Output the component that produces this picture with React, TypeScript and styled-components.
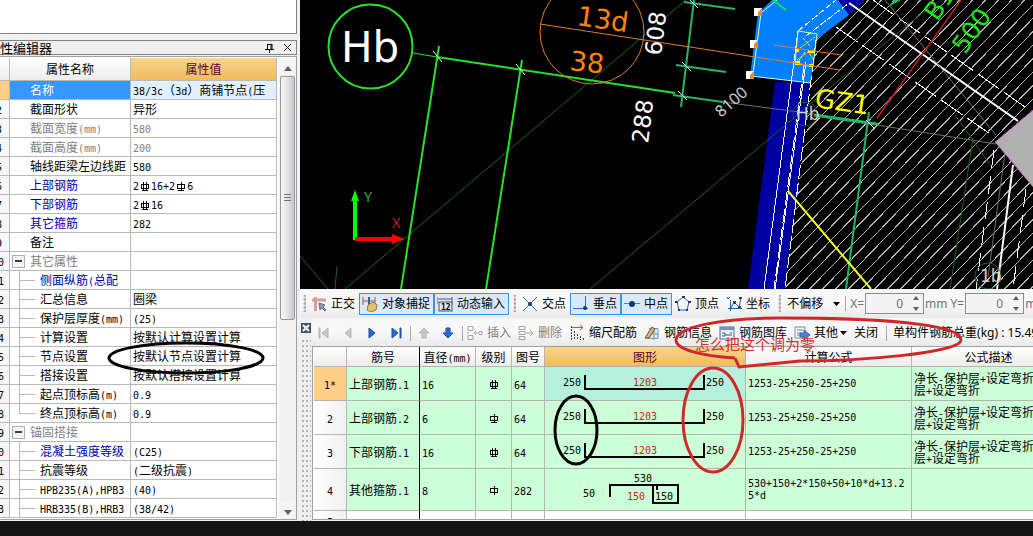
import React, { Fragment, ReactNode } from "react";
import styled, { createGlobalStyle } from "styled-components";

const Global = createGlobalStyle`
  * { box-sizing: border-box; }
  body { margin: 0; background: #141414; color: #000; font: 12px/16px "Noto Sans", "Noto Sans CJK SC", sans-serif; }
  button, input, select { font: inherit; color: inherit; }
`;

const Page = styled.div`
  min-height: 100vh;
  display: grid;
  grid-template: 1fr 15px / 300px minmax(0, 1fr);
  overflow: hidden;
  background: #f0f0f0;
`;
const Sidebar = styled.aside`
  position: relative;
  display: flex;
  flex-direction: column;
  padding-right: 3px;
  overflow: hidden;
`;
const Main = styled.main`
  display: flex;
  flex-direction: column;
  min-width: 0;
`;
const StatusStrip = styled.footer`
  grid-column: 1 / -1;
  background: #141414;
`;

/* ---------- property editor ---------- */
const EmptyPane = styled.div`
  height: 34px;
  margin-bottom: 6px;
  background: #fff;
  border: solid #80808a;
  border-width: 0 1px 1px 0;
`;
const PaneTitle = styled.header`
  display: flex;
  align-items: center;
  gap: 5px;
  height: 15px;
  padding-right: 2px;
  border: solid #808088;
  border-width: 1px 1px 1px 0;
  h2 { flex: 1; margin: 0; font-size: 13px; line-height: 12px; font-weight: 400; }
`;
const TitleButton = styled.button`
  width: 13px;
  height: 13px;
  padding: 0;
  border: 0;
  background: none;
  display: grid;
  place-items: center;
`;
const PropertyPane = styled.div`
  display: flex;
  flex: 1;
  margin: 1px 0;
  padding-top: 1px;
  background: #fff;
  border: solid #a0a0a0;
  border-width: 1px 1px 1px 0;
`;
const PropertyTable = styled.table`
  width: 277px;
  table-layout: fixed;
  border-collapse: separate;
  border-spacing: 0;
  align-self: flex-start;
  font-family: "Noto Sans CJK SC", sans-serif;
  th, td {
    height: 19px;
    padding: 0;
    border: solid #b8b8b8;
    border-width: 0 1px 1px 0;
    white-space: nowrap;
    overflow: hidden;
    line-height: 16px;
    font-weight: 400;
  }
  thead th { height: 23px; background: linear-gradient(#fff, #ececec); }
  thead th:last-child { background: linear-gradient(#f8d48c, #f0bc60); color: #600030; }
`;
const IndexCell = styled.th<{ $on?: boolean; $wide?: boolean }>`
  background: ${(p) => (p.$on ? "#ffcf88" : "#f7f7f7")};
  text-align: left;
  text-indent: ${(p) => (p.$wide ? "-8px" : "-4px")};
`;
const NameCell = styled.td<{ $tone: string; $on?: boolean }>`
  color: ${(p) => p.$tone};
  background: ${(p) => (p.$on ? "#3399ff" : "#fff")};
`;
const ValueCell = styled.td<{ $tone: string; $on?: boolean }>`
  && { padding-left: 2px; }
  color: ${(p) => p.$tone};
  background: ${(p) => (p.$on ? "#e0f0ff" : "#fff")};
`;
const NameLayout = styled.div<{ $indent: number }>`
  display: flex;
  align-items: center;
  height: 18px;
  padding-left: ${(p) => p.$indent}px;
`;
const Branch = styled.i<{ $last?: boolean }>`
  position: relative;
  width: 16px;
  height: 18px;
  margin-right: 5px;
  &::before { content: ""; position: absolute; left: 0; top: 0; bottom: ${(p) => (p.$last ? "8px" : "-1px")}; border-left: 1px solid #b8b8b8; }
  &::after { content: ""; position: absolute; left: 0; right: 0; top: 9px; border-top: 1px solid #b8b8b8; }
`;
const Fold = styled.button`
  width: 13px;
  height: 13px;
  margin-right: 5px;
  padding: 0;
  border: 1px solid #a8b0b8;
  background: #f4f4f4;
  display: grid;
  place-items: center;
`;
const ScrollTrack = styled.div`
  display: flex;
  flex-direction: column;
  align-items: center;
  flex: 1;
  margin-left: 2px;
  background: #f1f1f1;
`;
const ScrollButton = styled.button`
  width: 15px;
  height: 17px;
  padding: 0;
  border: 0;
  background: #f4f4f4;
`;
const Thumb = styled.div`
  display: flex;
  align-items: center;
  justify-content: center;
  width: 15px;
  height: 244px;
  margin: 1px 0 auto;
  border: 1px solid #969696;
  border-radius: 2px;
  background: linear-gradient(90deg, #f6f6f6, #e6e6e8 45%, #c8c8cc);
`;

const Ascii = styled.span`
  font-family: "DejaVu Sans Mono", monospace;
  font-size: 10px;
  line-height: 0;
`;
const Mixed = ({ children }: { children: string }) => (
  <>
    {children.split(/([\x20-\x7e]+)/).map((part, i) =>
      i % 2 ? <Ascii key={i}>{part}</Ascii> : <Fragment key={i}>{part}</Fragment>
    )}
  </>
);

const GradeSvg = styled.svg`
  vertical-align: -2px;
  margin: 0 1px;
`;
const Grade = ({ level }: { level: 1 | 2 | 3 }) => (
  <GradeSvg width="10" height="11" fill="none" stroke="#000" shapeRendering="crispEdges" aria-label={`grade ${level}`}>
    <path d="M1.5 3.5h7v4h-7z" />
    <path d={level === 3 ? "M3.5 1v9M6.5 1v9" : "M5 1v9"} />
    {level > 1 && <path d="M2 9.5h6" />}
  </GradeSvg>
);

type Prop = { name: string; value?: ReactNode; tone?: string; vtone?: string; kind?: "group" | "child" | "last" };
const BLUE = "#0000a8";
const GRAY = "#808080";
const props: Prop[] = [
  { name: "名称", value: <Mixed>38/3c（3d）商铺节点(压</Mixed>, tone: "#fff" },
  { name: "截面形状", value: "异形" },
  { name: "截面宽度(mm)", value: <Mixed>580</Mixed>, tone: GRAY, vtone: GRAY },
  { name: "截面高度(mm)", value: <Mixed>200</Mixed>, tone: GRAY, vtone: GRAY },
  { name: "轴线距梁左边线距", value: <Mixed>580</Mixed> },
  { name: "上部钢筋", value: <><Ascii>2</Ascii><Grade level={3} /><Ascii>16+2</Ascii><Grade level={2} /><Ascii>6</Ascii></>, tone: BLUE },
  { name: "下部钢筋", value: <><Ascii>2</Ascii><Grade level={3} /><Ascii>16</Ascii></>, tone: BLUE },
  { name: "其它箍筋", value: <Mixed>282</Mixed>, tone: BLUE },
  { name: "备注" },
  { name: "其它属性", tone: GRAY, kind: "group" },
  { name: "侧面纵筋(总配", tone: BLUE, kind: "child" },
  { name: "汇总信息", value: "圈梁", kind: "child" },
  { name: "保护层厚度(mm)", value: <Mixed>(25)</Mixed>, kind: "child" },
  { name: "计算设置", value: "按默认计算设置计算", kind: "child" },
  { name: "节点设置", value: "按默认节点设置计算", kind: "child" },
  { name: "搭接设置", value: "按默认搭接设置计算", kind: "child" },
  { name: "起点顶标高(m)", value: <Mixed>0.9</Mixed>, kind: "child" },
  { name: "终点顶标高(m)", value: <Mixed>0.9</Mixed>, kind: "last" },
  { name: "锚固搭接", tone: GRAY, kind: "group" },
  { name: "混凝土强度等级", value: <Mixed>(C25)</Mixed>, tone: BLUE, kind: "child" },
  { name: "抗震等级", value: <Mixed>(二级抗震)</Mixed>, kind: "child" },
  { name: "HPB235(A),HPB3", value: <Mixed>(40)</Mixed>, kind: "child" },
  { name: "HRB335(B),HRB3", value: <Mixed>(38/42)</Mixed>, kind: "child" },
];

const SideMark = styled.svg`
  position: absolute;
  left: 106px;
  top: 340px;
  pointer-events: none;
`;

const PropertyEditor = () => (
  <Sidebar>
    <EmptyPane />
    <PaneTitle>
      <h2>性编辑器</h2>
      <TitleButton aria-label="固定">
        <svg width="9" height="10" fill="none" stroke="#000"><path d="M2.5 1v5M2 1.5h5M6 1v5M7 1v5M0 6.5h9M4.5 7v3" /></svg>
      </TitleButton>
      <TitleButton aria-label="关闭">
        <svg width="9" height="9" stroke="#222"><path d="M1 1l7 7M8 1l-7 7" /></svg>
      </TitleButton>
    </PaneTitle>
    <PropertyPane>
      <PropertyTable>
        <colgroup><col style={{ width: 10 }} /><col style={{ width: 121 }} /><col /></colgroup>
        <thead><tr><th /><th>属性名称</th><th>属性值</th></tr></thead>
        <tbody>
          {props.map((p, i) => (
            <tr key={p.name}>
              <IndexCell $on={i === 0} $wide={i > 8}><Ascii>{i === 0 ? "" : i + 1}</Ascii></IndexCell>
              <NameCell $tone={p.tone ?? "#000"} $on={i === 0}>
                <NameLayout $indent={p.kind === "group" ? 2 : p.kind ? 9 : 20}>
                  {p.kind === "group" && (
                    <Fold aria-label={`折叠${p.name}`}><svg width="7" height="2"><path d="M0 1h7" stroke="#246" strokeWidth="2" /></svg></Fold>
                  )}
                  {(p.kind === "child" || p.kind === "last") && <Branch $last={p.kind === "last"} />}
                  <span><Mixed>{p.name}</Mixed></span>
                </NameLayout>
              </NameCell>
              <ValueCell $tone={p.vtone ?? "#000"} $on={i === 0}>{p.value}</ValueCell>
            </tr>
          ))}
        </tbody>
      </PropertyTable>
      <ScrollTrack>
        <ScrollButton aria-label="向上"><svg width="8" height="5"><path d="M0 5l4-5 4 5z" fill="#606060" /></svg></ScrollButton>
        <Thumb><svg width="7" height="8"><path d="M0 .5h7M0 3.5h7M0 6.5h7" stroke="#707070" /></svg></Thumb>
        <ScrollButton aria-label="向下"><svg width="8" height="5"><path d="M0 0l4 5 4-5z" fill="#606060" /></svg></ScrollButton>
      </ScrollTrack>
    </PropertyPane>
    <SideMark width="160" height="36"><ellipse cx="80" cy="18" rx="77" ry="15" fill="none" stroke="#000" strokeWidth="3" /></SideMark>
  </Sidebar>
);

/* ---------- drawing canvas ---------- */
const Canvas = styled.div`
  flex: 1 0 289px;
  background: #000;
  overflow: hidden;
`;
const Drawing = styled.svg`
  display: block;
  width: 100%;
  height: 289px;
  font-family: "DejaVu Sans", sans-serif;
`;

const hatch = Array.from({ length: 44 }, (_, i) => 220 + i * 13);

const Plan = () => (
  <Canvas>
    <Drawing fill="none" role="img" aria-label="结构平面图">
      <defs>
        <clipPath id="slab"><path d="M516 40L551 13L565 0H733V289H485Z" /></clipPath>
      </defs>
      <g clipPath="url(#slab)" stroke="#b4b4b4" shapeRendering="crispEdges">
        {hatch.map((x) => <path key={x} d={`M${x - 20} 300L${x + 290} -20`} />)}
      </g>

      <path d="M475 82H511L485 289H448Z" fill="#0000a0" />
      <path d="M536 0H565L549 15Z" fill="#0000a0" />
      <path d="M458 13L472 0H538L549 15L516 40L511 83L450 76Z" fill="#0080ff" />
      <path d="M450 76L511 83M453 74L461 13L477 0" stroke="#e8ffb0" />
      <g stroke="#fff" shapeRendering="crispEdges">
        <path d="M498 31L536 0M506 36L549 3" strokeDasharray="7 2" />
        <path d="M498 31L464 289M506 62L475 289" />
        <path d="M504 66L474 289M516 40L485 289" strokeDasharray="14 4" />
        <path d="M573 0L725 107M536 27L693 136" strokeDasharray="26 6" />
        <path d="M694 150L676 289M726 189L713 289" strokeDasharray="18 8" />
      </g>
      <path d="M549 3L718 121M713 165L697 289" stroke="#fff" strokeWidth="2" />
      <path d="M498 31L517 34L513 67L495 63Z" stroke="#f4f078" />
      <path d="M500 48L515 37M497 60L508 52L514 60M503 38l7 8M505 52l-7 10" stroke="#f0e850" strokeDasharray="3 1" />
      <path d="M495 61h5v4h-5zM508 50h6v3h-6zM496 49h3v3h-3zM509 64h4v3h-4z" fill="#ff0" />

      <g stroke="#707070">
        <path d="M423 102L514 114M577 125L696 144M585 0L696 135M705 153L688 277" />
      </g>
      <g stroke="#1d641d">
        <path d="M45 289L386 0M290 289L495 117L533 85L630 7M0 256L28 289M37 266L35 289M655 115L691 166M673 138L650 289" />
        <circle cx="505" cy="114" r="12" />
        <circle cx="688" cy="276" r="13" />
      </g>

      <g stroke="#28e028" strokeWidth="2">
        <circle cx="70.500" cy="46.500" r="42" />
        <path d="M113 53L137 57" strokeWidth="1" />
        <path d="M137 57L375 93M139 46L101 289M222 60L186 289" />
      </g>
      <g stroke="#20b868" strokeWidth="2">
        <path d="M394 0L381 107M384 2L435 9M376 65L426 72M373 95L423 102M515 115L578 124M569 112L546 289" />
        <path d="M514 115L576 124" strokeWidth="3" />
        <path d="M473 0L486 10" stroke="#00e060" />
      </g>
      <path d="M588 7L594 0H601Z" fill="#20b868" />
      <path d="M133 51l9 11M216 64l9 11M390 0l8 8M382 62l9 9M378 91l9 9M566 120l9 9" stroke="#fff" />

      <g stroke="#e07c28">
        <circle cx="292" cy="32" r="52" />
        <path d="M240 24L540 70M474 45L541 55" />
      </g>
      <path d="M577 118L661 0" stroke="#b82020" strokeWidth="1.500" />
      <path d="M488 191L571 289" stroke="#f8f830" strokeWidth="2" />
      <path d="M695 142L733 110V187Z" fill="#b0b0b0" />
      <path d="M733 110L695 142L733 187" stroke="#d040d0" strokeDasharray="4 2" />

      {[[458, 12], [454, 44], [450, 75]].map(([x, y]) => (
        <g key={y}>
          <rect x={x - 4} y={y - 4} width="8" height="8" fill="#fff" />
          <path d={`M${x + 4} ${y - 4}v8h-4v-4z`} fill="#f08830" />
        </g>
      ))}

      <path d="M55 240V199" stroke="#0f0" strokeWidth="4" />
      <path d="M51 201L55 190L59 201Z" fill="#0f0" />
      <path d="M55 239H93" stroke="#f00" strokeWidth="4" />
      <path d="M92 234L105 239L92 244Z" fill="#f00" />
      <g fontFamily="Lato, sans-serif" fontSize="13">
        <text x="64" y="202" fill="#30b030">Y</text>
        <text x="92" y="228" fill="#c02020">X</text>
      </g>

      <text x="41" y="62" fontSize="42" fill="#fff">Hb</text>
      <g fill="#ff8408" fontSize="27">
        <text transform="translate(276 25) rotate(8)">13d</text>
        <text transform="translate(269 70) rotate(6)">38</text>
      </g>
      <g fill="#fff" fontSize="23">
        <text transform="translate(361 56) rotate(-83)">608</text>
        <text transform="translate(348 144) rotate(-83)">288</text>
      </g>
      <text transform="translate(421 118) rotate(-41)" fontSize="16" fill="#ccc" fontFamily="Noto Sans, sans-serif">8100</text>
      <g fill="#18e818" fontSize="25">
        <text transform="translate(665 55) rotate(-55)">500</text>
        <text transform="translate(637 22) rotate(-55)">B1</text>
      </g>
      <text transform="translate(514 107) rotate(8)" fontSize="26" fill="#ff0">GZ1</text>
      <g fill="#d0d0d0" fontSize="17">
        <text x="496" y="120">Hb</text>
        <text x="680" y="282">1b</text>
      </g>
    </Drawing>
  </Canvas>
);

/* ---------- toolbars ---------- */
const Dock = styled.section`
  position: relative;
  height: 232px;
  display: flex;
  flex-direction: column;
  overflow: hidden;
  background: #f0f0f0;
`;
const Toolbar = styled.div<{ $h: number; $top?: number }>`
  display: flex;
  align-items: center;
  flex: none;
  height: ${(p) => p.$h}px;
  padding-top: ${(p) => p.$top ?? 0}px;
  background: linear-gradient(#f6f6f6, #f9f9f9 45%, #eaeaea);
  white-space: nowrap;
`;
const ToolButton = styled.button<{ $on?: boolean; $muted?: boolean }>`
  display: flex;
  flex: none;
  align-items: center;
  gap: 4px;
  height: 22px;
  padding: 0 3px 0 2px;
  border: 1px solid ${(p) => (p.$on ? "#3c94dc" : "transparent")};
  background: ${(p) => (p.$on ? "#d8eafa" : "none")};
  color: ${(p) => (p.$muted ? "#808080" : "#000")};
`;
const ToolLabel = styled.span`
  display: flex;
  align-items: center;
  gap: 2px;
`;
const NavButton = styled.button`
  flex: none;
  width: 24px;
  height: 22px;
  padding: 0;
  border: 0;
  background: none;
  display: grid;
  place-items: center;
`;
const Grip = styled.i<{ $w: number }>`
  flex: none;
  width: ${(p) => p.$w}px;
  height: 17px;
  background: radial-gradient(circle at 2px 2px, #a8a8a8 1px, transparent 2px) center / 3px 4px repeat-y;
`;
const Divider = styled.i<{ $w: number }>`
  flex: none;
  width: ${(p) => p.$w}px;
  height: 15px;
  background: linear-gradient(#a8a8a8, #a8a8a8) center / 1px 15px no-repeat;
`;
const OffsetField = styled.label`
  display: flex;
  align-items: center;
  flex: none;
  height: 22px;
  padding-left: 3px;
  select { width: 46px; padding: 0; border: 0; background: none; appearance: none; }
`;
const CoordField = styled.label`
  display: flex;
  align-items: center;
  flex: none;
  gap: 1px;
  margin-right: 3px;
  color: #707070;
`;
const SpinBox = styled.span`
  display: flex;
  align-items: center;
  width: 59px;
  height: 21px;
  padding-right: 3px;
  border: 1px solid #8c8c8c;
  background: #f4f4f4;
  input { flex: 1; min-width: 0; padding: 0 9px 0 0; border: 0; background: none; text-align: right; }
`;
const Total = styled.span`
  padding-left: 2px;
`;

const Ico = ({ children }: { children: ReactNode }) => (
  <svg width="16" height="16" fill="none" stroke="#2860a8" aria-hidden="true">{children}</svg>
);
const Caret = () => <svg width="7" height="4"><path d="M0 0h7L3.500 4z" fill="#000" /></svg>;

const icons: Record<string, ReactNode> = {
  正交: <Ico><path d="M1 4h14M4.500 1v14" stroke="#dc9c98" strokeWidth="3" /><path d="M8 7l1 7 2-2 3 3 1-1-3-3 2-2z" fill="#8c98ac" stroke="#607088" /></Ico>,
  对象捕捉: <Ico><path d="M1 1v8M13 1v8M1 5h12" stroke="#a85048" /><path d="M7 1v8" stroke="#386098" strokeWidth="2" /><path d="M5 14l1-5 5-3 4 3-1 5-5 2z" fill="#e4c468" stroke="#907848" /></Ico>,
  动态输入: <Ico><path d="M0 1v7M15 1v7M1 3h14" stroke="#884848" /><rect x="2" y="6" width="13" height="9" fill="#dce8f0" stroke="#405868" /><text x="4" y="14" fontSize="8" fontFamily="DejaVu Sans Mono" fontWeight="700" fill="#000" stroke="none">12</text></Ico>,
  交点: <Ico><path d="M1 1l14 14M15 1L1 15" stroke="#3870b8" /><circle cx="8" cy="8" r="2" fill="#103878" stroke="none" /></Ico>,
  垂点: <Ico><path d="M12.500 0v14M0 12.500h15" stroke="#2870b8" /><circle cx="12" cy="12" r="2" fill="#103878" stroke="none" /></Ico>,
  中点: <Ico><path d="M0 7.500h16" stroke="#5088b8" /><circle cx="8" cy="8" r="3" fill="#103878" stroke="none" /></Ico>,
  顶点: <Ico><path d="M8 1l6 5-2 8H4L2 6z" /><path d="M7 0h3v2H7zM0 5h3v2H0zM13 5h3v2h-3zM3 13h2v2H3zM11 13h2v2h-2z" fill="#103878" stroke="none" /></Ico>,
  坐标: <Ico><path d="M4.500 4v11M2 12.500h14M5 12l3-6 5 5 2-9M1 1l1 2 2-2" /><path d="M7 5h3v3H7zM12 10h3v2h-3zM13 1h3v2h-3z" fill="#204878" stroke="none" /></Ico>,
  插入: <Ico><path d="M1 1.500h5v4H1zM1 10.500h5v4H1zM0 8h2M7 8h4M9 6L7 8l2 2M12 6.500h3v3h-3z" stroke="#a4a4a4" /></Ico>,
  删除: <Ico><path d="M1 1.500h6v3H1zM1 6.500h6v3H1zM1 11.500h6v3H1zM8 8h7M12 5l3 3-3 3" stroke="#a4a4a4" /></Ico>,
  缩尺配筋: <Ico><path d="M2.500 1v14M5.500 6v9M8.500 9v6M11.500 11v4M14.500 13v2" stroke="#304050" strokeDasharray="2 1" /><path d="M3 2.500h10M11 0l3 2.500-3 2.500" stroke="#b05048" /></Ico>,
  钢筋信息: <Ico><path d="M5 3.500h9v10H3M10 4v11M4 9h11" stroke="#7898b8" fill="#dce8f4" /><path d="M1 13L8 2l3 2-6 9z" fill="#e4b860" stroke="#605038" /></Ico>,
  钢筋图库: <Ico><rect x="1" y="2" width="14" height="12" fill="#e8f0f8" stroke="#506888" /><path d="M1 3.500h14" stroke="#6c98c4" strokeWidth="3" /><path d="M3 8h3v3H3M6 10h5M12 7v4" stroke="#486080" /></Ico>,
  其他: <Ico><path d="M1 2h10v11H1z" fill="#f4f8ff" stroke="#788cac" /><path d="M3 5h6M3 8h5M3 10h4" stroke="#6880a0" /><path d="M6 8h4V5l6 5-6 5v-3H6z" fill="#5080d0" stroke="#3868b0" /></Ico>,
};

const Tool = ({ name, on, muted, caret }: { name: string; on?: boolean; muted?: boolean; caret?: boolean }) => (
  <ToolButton $on={on} $muted={muted} aria-pressed={on} disabled={muted}>
    {icons[name]}
    <ToolLabel>{name}{caret && <Caret />}</ToolLabel>
  </ToolButton>
);

const Nav = ({ label, d, muted }: { label: string; d: string; muted?: boolean }) => (
  <NavButton aria-label={label} disabled={muted}>
    <svg width="12" height="12" fill={muted ? "#c8c8c8" : "#2868d8"} stroke={muted ? "#b4b4b4" : "#1848a8"}><path d={d} /></svg>
  </NavButton>
);

const Coord = ({ axis, unit }: { axis: string; unit: string }) => (
  <CoordField>
    {axis}=
    <SpinBox>
      <input defaultValue="0" aria-label={axis} />
      <svg width="8" height="15"><path d="M1 4l3-4 3 4zM1 11l3 4 3-4z" fill="#606060" /></svg>
    </SpinBox>
    {unit}
  </CoordField>
);

/* ---------- rebar table ---------- */
const TableArea = styled.div`
  display: flex;
  flex: 1;
  min-height: 0;
`;
const DockHandle = styled.div`
  flex: none;
  width: 12px;
  padding: 3px 1px 0;
  background: #f0f0f0;
  &::after {
    content: "";
    display: block;
    height: 186px;
    margin-top: 2px;
    background: radial-gradient(circle at 2px 2px, #b4b4b4 1px, transparent 1px) 0 0 / 4px 5px;
  }
`;
const DockBody = styled.div`
  flex: 1;
  min-width: 0;
  display: flex;
  flex-direction: column;
`;
const GridFrame = styled.div`
  flex: 1;
  min-height: 0;
  overflow: hidden;
  margin-bottom: 1px;
  padding-left: 1px;
  background: #fff;
  border: solid #a0a0a0;
  border-width: 1px 0 1px 1px;
`;
const RebarTable = styled.table`
  width: 752px;
  table-layout: fixed;
  border-collapse: separate;
  border-spacing: 0;
  font-family: "Noto Sans CJK SC", sans-serif;
  th, td { padding: 0 2px; border: solid #b4b4b4; border-width: 0 1px 1px 0; font-weight: 400; line-height: 12px; }
  thead th { height: 20px; padding: 0; background: linear-gradient(#fff, #ececec); }
  thead th:nth-child(6) { background: linear-gradient(#f8d48c, #f0bc60); color: #600030; }
  tbody td { background: #ccffd8; }
  tr > :nth-child(2) { border-right-color: #000; }
  tbody td:nth-child(4) { text-align: center; }
  tbody td:nth-child(6) { padding: 0; }
`;
const BodyRow = styled.tr<{ $h: number; $on?: boolean; $blank?: boolean }>`
  height: ${(p) => p.$h}px;
  && > th { background: ${(p) => (p.$on ? "#ffcf88" : "linear-gradient(90deg, #fff, #f0f0f0)")}; }
  ${(p) => p.$on && "&& > td:nth-child(6) { background: #b4f0dc; }"}
  ${(p) => p.$blank && "&& > td { background: #fff; }"}
`;
const Shape = styled.svg`
  display: block;
  font: 10px "DejaVu Sans Mono", monospace;
`;

const UBar = () => (
  <Shape width="199" height="32">
    <path d="M40 7V21H159V7" fill="none" stroke="#000" strokeWidth="2" />
    <text x="18" y="18">250</text>
    <text x="88" y="18" fill="#c02818">1203</text>
    <text x="161" y="18">250</text>
  </Shape>
);
const Hoop = () => (
  <Shape width="199" height="41">
    <path d="M65 28V16H133V34H108V16M112 16V21" fill="none" stroke="#000" strokeWidth="2" />
    <text x="89" y="13">530</text>
    <text x="38" y="28">50</text>
    <text x="82" y="31" fill="#c02818">150</text>
    <text x="110" y="31">150</text>
  </Shape>
);

const bars: { id: string; name: string; dia: string; grade: 1 | 2 | 3; fig: string; hoop?: boolean; formula: string; note: string; h: number }[] = [
  { id: "1*", name: "上部钢筋.1", dia: "16", grade: 3, fig: "64", formula: "1253-25+250-25+250", note: "净长-保护层+设定弯折-保护层+设定弯折", h: 34 },
  { id: "2", name: "上部钢筋.2", dia: "6", grade: 2, fig: "64", formula: "1253-25+250-25+250", note: "净长-保护层+设定弯折-保护层+设定弯折", h: 34 },
  { id: "3", name: "下部钢筋.1", dia: "16", grade: 3, fig: "64", formula: "1253-25+250-25+250", note: "净长-保护层+设定弯折-保护层+设定弯折", h: 34 },
  { id: "4", name: "其他箍筋.1", dia: "8", grade: 1, fig: "282", hoop: true, formula: "530+150+2*150+50+10*d+13.25*d", note: "", h: 42 },
];
const Note = styled.div`
  width: 156px;
`;
const Formula = styled.div`
  font-family: "DejaVu Sans Mono", monospace;
  font-size: 10px;
  word-break: break-all;
`;

const Marks = styled.svg`
  position: absolute;
  left: 0;
  top: 0;
  pointer-events: none;
`;

const RebarDock = () => (
  <Dock>
    <Toolbar $h={29}>
      <Grip $w={8} />
      <Tool name="正交" />
      <Tool name="对象捕捉" on />
      <Tool name="动态输入" on />
      <Grip $w={10} />
      <Tool name="交点" />
      <Tool name="垂点" on />
      <Tool name="中点" on />
      <Tool name="顶点" />
      <Tool name="坐标" />
      <Grip $w={10} />
      <OffsetField>
        <select aria-label="偏移方式"><option>不偏移</option></select>
        <Caret />
      </OffsetField>
      <Divider $w={10} />
      <Coord axis="X" unit="mm" />
      <Coord axis="Y" unit="mm" />
    </Toolbar>
    <TableArea>
      <DockHandle>
        <svg width="10" height="10"><rect width="10" height="10" fill="#385468" /><path d="M2 2l6 6M8 2L2 8" stroke="#fff" strokeWidth="2" /></svg>
      </DockHandle>
      <DockBody>
        <Toolbar $h={28} $top={2}>
          <Nav label="首条" muted d="M1 1h1v10H1zM10 1v10L4 6z" />
          <Nav label="上一条" muted d="M9 1v10L3 6z" />
          <Nav label="下一条" d="M3 1v10l6-5z" />
          <Nav label="末条" d="M10 1h1v10h-1zM2 1v10l6-5z" />
          <Divider $w={4} />
          <Nav label="上移" muted d="M6 1l5 5H8v5H4V6H1z" />
          <Nav label="下移" d="M6 11l5-5H8V1H4v5H1z" />
          <Divider $w={4} />
          <Tool name="插入" muted />
          <Tool name="删除" muted />
          <Tool name="缩尺配筋" />
          <Tool name="钢筋信息" />
          <Tool name="钢筋图库" />
          <Tool name="其他" caret />
          <ToolButton>关闭</ToolButton>
          <Divider $w={9} />
          <Total>单构件钢筋总重(kg) : 15.49</Total>
        </Toolbar>
        <GridFrame>
          <RebarTable>
            <colgroup>
              {[33, 73, 56, 36, 33, 201, 166].map((w, i) => <col key={i} style={{ width: w }} />)}
              <col />
            </colgroup>
            <thead>
              <tr><th /><th>筋号</th><th><Mixed>直径(mm)</Mixed></th><th>级别</th><th>图号</th><th>图形</th><th>计算公式</th><th>公式描述</th></tr>
            </thead>
            <tbody>
              {bars.map((b, i) => (
                <BodyRow key={b.id} $h={b.h} $on={i === 0}>
                  <th><Ascii>{b.id}</Ascii></th>
                  <td><Mixed>{b.name}</Mixed></td>
                  <td><Ascii>{b.dia}</Ascii></td>
                  <td><Grade level={b.grade} /></td>
                  <td><Ascii>{b.fig}</Ascii></td>
                  <td>{b.hoop ? <Hoop /> : <UBar />}</td>
                  <td><Formula>{b.formula}</Formula></td>
                  <td><Note><Mixed>{b.note}</Mixed></Note></td>
                </BodyRow>
              ))}
              <BodyRow $h={20} $blank>
                <th><Ascii>5</Ascii></th><td /><td /><td /><td /><td /><td /><td />
              </BodyRow>
            </tbody>
          </RebarTable>
        </GridFrame>
      </DockBody>
    </TableArea>
    <Marks width="733" height="232" fill="none" strokeWidth="3">
      <ellipse cx="276" cy="141" rx="21" ry="34" stroke="#000" />
      <ellipse cx="413" cy="131" rx="30" ry="52" stroke="#d02828" />
      <path d="M435 69C400 67 376 60 376 51C377 38 420 29 480 29C570 29 661 34 661 51C661 64 560 72 500 72L439 78L435 69" stroke="#d02828" />
      <text x="395" y="61" fontSize="15" fill="#d83030" fontFamily="Noto Sans CJK SC, sans-serif">怎么把这个调为零</text>
    </Marks>
  </Dock>
);

export default function App() {
  return (
    <Page>
      <Global />
      <PropertyEditor />
      <Main>
        <Plan />
        <RebarDock />
      </Main>
      <StatusStrip />
    </Page>
  );
}
